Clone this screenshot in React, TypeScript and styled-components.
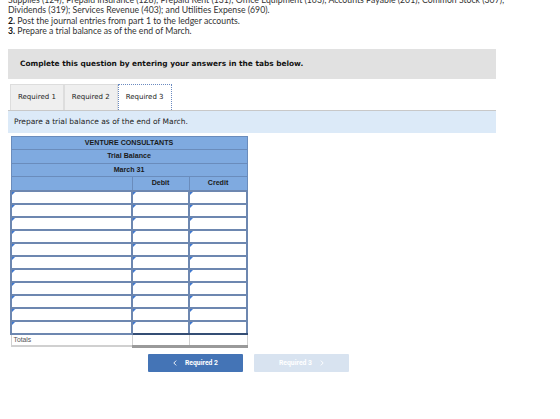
import React from 'react';
import styled, { createGlobalStyle } from 'styled-components';

const GlobalStyle = createGlobalStyle`
  body {
    margin: 0;
    background: #ffffff;
    font-family: Lato, "Open Sans", Arial, sans-serif;
    color: #222;
  }
`;

const Page = styled.div`
  padding: 0 8px;
  margin-top: -5px;
`;

const Instructions = styled.div`
  font-size: 8.7px;
  line-height: 10.4px;
  color: #333;
  white-space: nowrap;

  b {
    font-weight: 700;
    color: #111;
  }
`;

const Notice = styled.div`
  margin-top: 12px;
  width: 488px;
  height: 30px;
  box-sizing: border-box;
  background: #e1e1e1;
  padding: 0 0 0 12px;
  display: flex;
  align-items: center;
  font-family: "DejaVu Sans", Verdana, sans-serif;
  font-weight: 700;
  font-size: 7.4px;
  color: #111;
`;

const Tabs = styled.div`
  margin-top: 5px;
  width: 488px;
  display: flex;
  padding-left: 2px;
  box-sizing: border-box;
  border-bottom: 1px solid #c8c8c8;
`;

const Tab = styled.div<{ active?: boolean }>`
  height: 26px;
  padding: 0 7px;
  display: flex;
  align-items: center;
  box-sizing: border-box;
  font-family: "DejaVu Sans", Verdana, sans-serif;
  font-size: 7px;
  color: #222;
  background: ${p => (p.active ? '#ffffff' : '#efefef')};
  border: ${p => (p.active ? '1px dotted #6a8ac0' : '1px solid #dddddd')};
  border-bottom: none;
`;

const Prompt = styled.div`
  width: 488px;
  height: 22px;
  box-sizing: border-box;
  background: #dceaf8;
  padding-left: 6px;
  display: flex;
  align-items: center;
  font-family: "DejaVu Sans", Verdana, sans-serif;
  font-size: 7.5px;
  color: #222;
`;

const Sheet = styled.table`
  margin: 3px 0 0 2px;
  width: 236px;
  border-collapse: collapse;
  table-layout: fixed;
  font-family: Arial, "Liberation Sans", sans-serif;
  font-size: 7.1px;
`;

const HeadCell = styled.th`
  height: 12.5px;
  padding: 0;
  background: #7faae0;
  border: 1px solid #6a8cbc;
  font-weight: 700;
  color: #1a1a1a;
  text-align: center;
`;

const InputCell = styled.td<{ last?: boolean }>`
  height: 11px;
  padding: 0;
  background: #ffffff;
  border: 2px solid #6d87b0;
  border-bottom-color: ${p => (p.last ? '#344d74' : '#6d87b0')};
  position: relative;

  &::before {
    content: '';
    position: absolute;
    left: 0;
    top: 0;
    border-left: 3px solid #3f78d0;
    border-bottom: 3px solid transparent;
  }
`;

const TotalLabel = styled.td`
  height: 10px;
  padding: 0 0 0 2px;
  border: 1px solid #d0d0d0;
  border-bottom: 2px solid #d0d0d0;
  color: #555;
  font-size: 6.8px;
`;

const TotalCell = styled.td`
  height: 10px;
  padding: 0;
  border: 1px solid #d0d0d0;
  border-bottom: 3px solid #9a9a9a;
`;

const Nav = styled.div`
  margin: 6px 0 0 140px;
  display: flex;
  gap: 11px;
`;

const NavButton = styled.div<{ disabled?: boolean }>`
  width: 95px;
  height: 18px;
  border-radius: 1px;
  background: ${p => (p.disabled ? '#d8e3f0' : '#4474b6')};
  color: #ffffff;
  display: flex;
  align-items: center;
  justify-content: center;
  gap: 8px;
  font-family: Roboto, Arial, sans-serif;
  font-weight: 700;
  font-size: 6.8px;
`;

const Chevron = ({ dir }: { dir: 'left' | 'right' }) => (
  <svg width="4" height="6" viewBox="0 0 4 6">
    <path
      d={dir === 'left' ? 'M3.2 0.6 L0.8 3 L3.2 5.4' : 'M0.8 0.6 L3.2 3 L0.8 5.4'}
      fill="none"
      stroke="#ffffff"
      strokeWidth="0.9"
    />
  </svg>
);

const ROWS = 11;

export default function App() {
  return (
    <>
      <GlobalStyle />
      <Page>
        <Instructions>
          <div>
            Supplies (124); Prepaid Insurance (128); Prepaid Rent (131); Office Equipment (163); Accounts Payable (201); Common Stock (307);
          </div>
          <div>Dividends (319); Services Revenue (403); and Utilities Expense (690).</div>
          <div>
            <b>2.</b> Post the journal entries from part 1 to the ledger accounts.
          </div>
          <div>
            <b>3.</b> Prepare a trial balance as of the end of March.
          </div>
        </Instructions>

        <Notice>Complete this question by entering your answers in the tabs below.</Notice>

        <Tabs>
          <Tab>Required 1</Tab>
          <Tab>Required 2</Tab>
          <Tab active>Required 3</Tab>
        </Tabs>
        <Prompt>Prepare a trial balance as of the end of March.</Prompt>

        <Sheet>
          <colgroup>
            <col style={{ width: 121 }} />
            <col style={{ width: 57 }} />
            <col style={{ width: 58 }} />
          </colgroup>
          <thead>
            <tr>
              <HeadCell colSpan={3}>VENTURE CONSULTANTS</HeadCell>
            </tr>
            <tr>
              <HeadCell colSpan={3}>Trial Balance</HeadCell>
            </tr>
            <tr>
              <HeadCell colSpan={3}>March 31</HeadCell>
            </tr>
            <tr>
              <HeadCell />
              <HeadCell>Debit</HeadCell>
              <HeadCell>Credit</HeadCell>
            </tr>
          </thead>
          <tbody>
            {Array.from({ length: ROWS }).map((_, i) => (
              <tr key={i}>
                <InputCell />
                <InputCell last={i === ROWS - 1} />
                <InputCell last={i === ROWS - 1} />
              </tr>
            ))}
            <tr>
              <TotalLabel>Totals</TotalLabel>
              <TotalCell />
              <TotalCell />
            </tr>
          </tbody>
        </Sheet>

        <Nav>
          <NavButton>
            <Chevron dir="left" />
            Required 2
          </NavButton>
          <NavButton disabled>
            Required 3
            <Chevron dir="right" />
          </NavButton>
        </Nav>
      </Page>
    </>
  );
}
